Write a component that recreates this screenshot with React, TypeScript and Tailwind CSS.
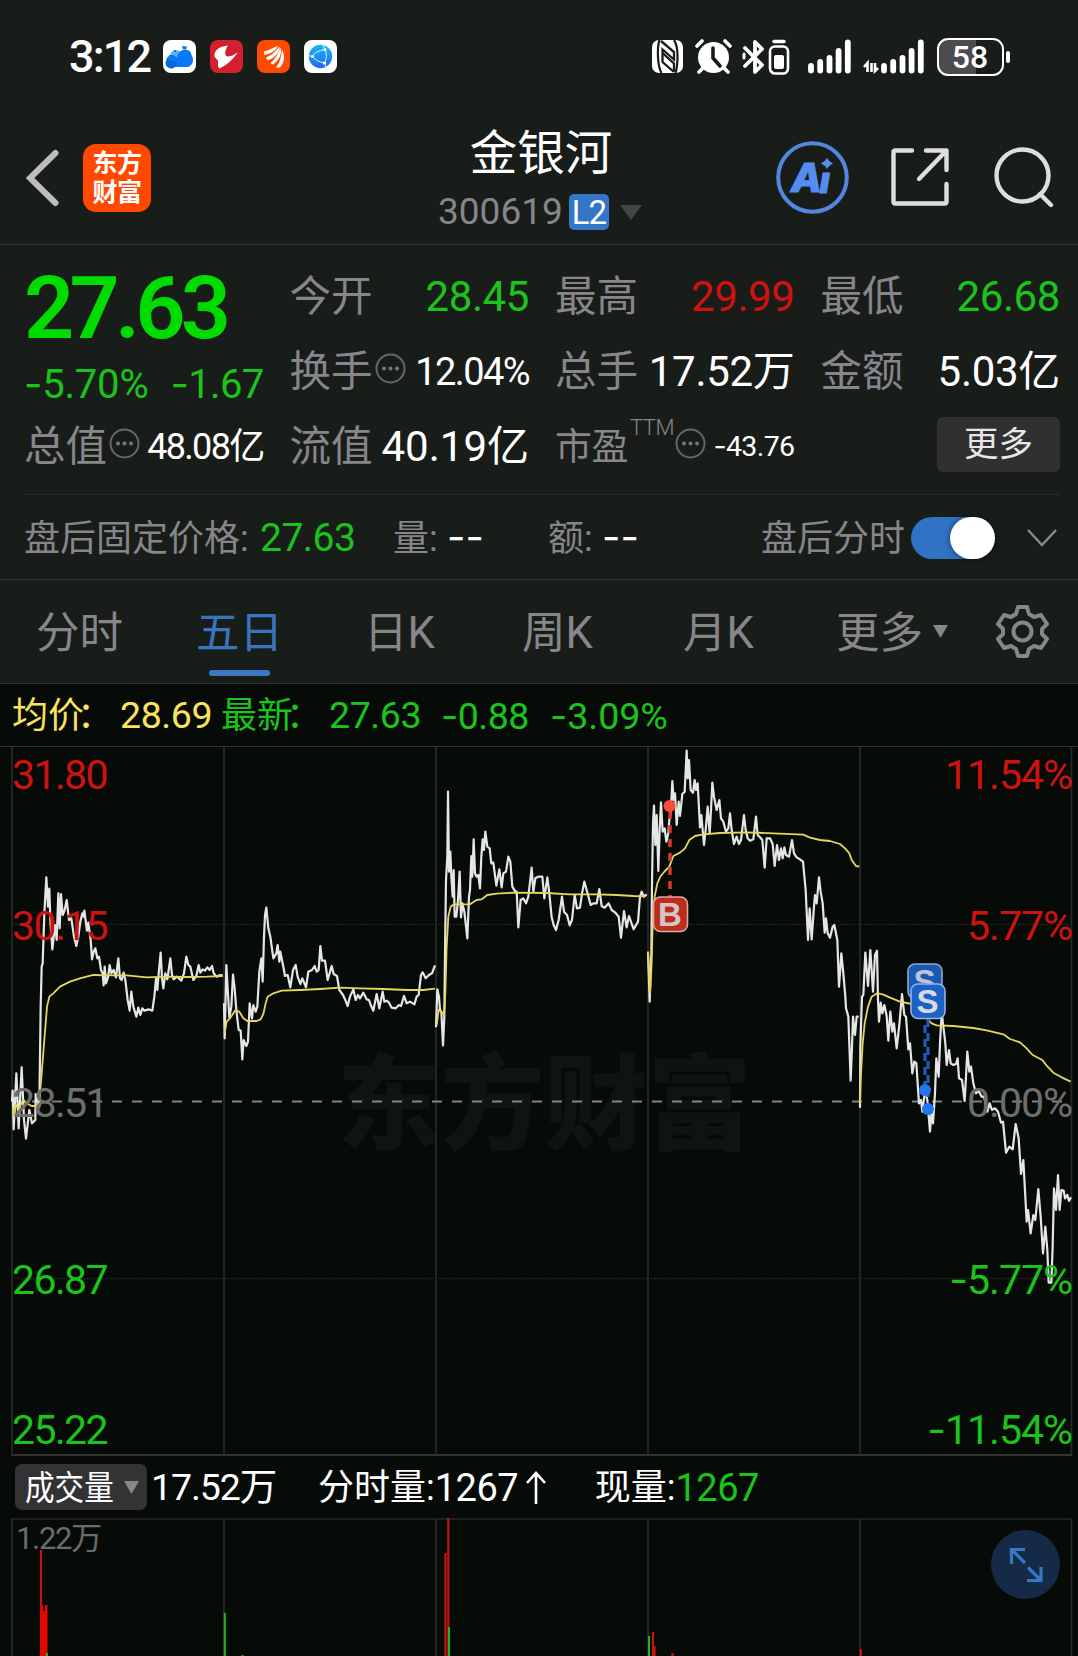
import React from "react";

const cjk = "font-['Roboto','Noto_Sans_CJK_SC',sans-serif]";

/** Numeric text: hyphens are set in Inter, whose dash is wider. */
function Num({ children, className = "" }: { children: string; className?: string }) {
  return (
    <span className={`whitespace-pre ${className}`}>
      {children.split(/(-+)/).map((part, i) =>
        part.startsWith("-") ? (
          <span key={i} className="font-['Inter']">{part}</span>
        ) : (
          part
        ),
      )}
    </span>
  );
}

function Info() {
  return (
    <svg className="size-[31px] shrink-0" viewBox="0 0 31 31" fill="none">
      <circle cx="15.5" cy="15.5" r="14" stroke="#67676a" strokeWidth="2" />
      <circle cx="9" cy="15.5" r="2" fill="#77777b" />
      <circle cx="15.5" cy="15.5" r="2" fill="#77777b" />
      <circle cx="22" cy="15.5" r="2" fill="#77777b" />
    </svg>
  );
}

function Signal() {
  return (
    <svg className="h-[35px] w-[43px]" viewBox="0 0 43 35" stroke="#fff" strokeWidth="5.8" strokeLinecap="round">
      <path d="M3 27v4.500M12.200 23v8.500M21.500 19v12.500M30.600 12v19.500M39.800 3.500v28" />
    </svg>
  );
}

function StatusBar() {
  return (
    <div className="flex h-[113px] items-center pl-[69px] text-white">
      <span className="w-[94px] text-[45px] leading-none font-medium tracking-[-1.800px]">3:12</span>
      <div className="flex gap-[14px]">
        <svg className="size-[33px]" viewBox="0 0 33 33">
          <rect width="33" height="33" rx="8" fill="#fff" />
          <circle cx="13" cy="16" r="6" fill="#58b4fb" />
          <path d="M9 27a6 6 0 0 1-2-11.500C11 14 13 17 14 18c0-10 14-11 14.500-3C32 20 29 27 24 27z" fill="#0879f4" />
          <path d="M3.500 20a5.500 5.500 0 1 0 10 2z" fill="#0568d8" />
          <path d="M19 6l5 .5-1 3h-3zM6 15l3 .5-1 2H6zM11 10h2v2h-2z" fill="#0879f4" />
        </svg>
        <svg className="size-[33px]" viewBox="0 0 33 33">
          <rect width="33" height="33" rx="8" fill="#d4202e" />
          <path d="M18 5.500C9 6 4 11 4.500 16c0 2 3 3 3.500 5 .5 3-1 5 1.500 7.500 6-3 12-7 18.500-16.500-4 3-7 4.500-11 4.500-2.500-1-2.500-6 1-11z" fill="#fff" />
        </svg>
        <svg className="size-[33px]" viewBox="0 0 33 33">
          <rect width="33" height="33" rx="8" fill="#ff4a00" />
          <path d="M7 11.500c5-1 9-4 14-5.500-2 5-8 8-14 9zM9 17.500c6-2 10-7 13.500-11 1 5-5 12-12 14zM13.500 23c5-4 8-10 10-15.500 2 6-2 14-8 17zM19 27.500c4-5 5-10 6-18 3 6 3 12-2 18z" fill="#fff" />
        </svg>
        <svg className="size-[33px]" viewBox="0 0 33 33">
          <defs>
            <linearGradient id="globe" x1="0" y1="0" x2="0" y2="1">
              <stop stopColor="#18b8f8" />
              <stop offset="1" stopColor="#2468ee" />
            </linearGradient>
          </defs>
          <rect width="33" height="33" rx="8" fill="#fff" />
          <circle cx="16.500" cy="16.500" r="11.700" fill="url(#globe)" />
          <path d="M8.500 16.500Q11 11 21 9.500Q24 16 20.500 23Q13 22 8.500 16.500M21 9.500l-2-4.500M20.500 23l1.500 4M8.500 16.500l-4-1" fill="none" stroke="#d6f4ff" />
          <circle cx="8.500" cy="16.500" r="1.600" fill="#fff" />
          <circle cx="21" cy="9.500" r="1.600" fill="#fff" />
          <circle cx="20.500" cy="23" r="1.600" fill="#fff" />
        </svg>
      </div>
      <div className="ml-auto flex items-center pr-[68px]">
        <svg className="h-[33px] w-[31px]" viewBox="0 0 31 33">
          <rect width="31" height="33" rx="7" fill="#fff" />
          <path d="M7.500 0Q5.500 6 6 17T9.500 33M22 0Q25.500 5 25.500 16T23.500 33" stroke="#191d1a" strokeWidth="2.200" fill="none" />
          <path d="M9 1L22 12V19.500L10.500 9.500V13L22 23.500V31.500" stroke="#191d1a" strokeWidth="2.300" fill="none" />
          <path d="M10.500 14V22L22 32" stroke="#191d1a" strokeWidth="2.300" fill="none" />
        </svg>
        <svg className="ml-[12px] h-[35px] w-[37px]" viewBox="0 0 37 35">
          <circle cx="18.500" cy="18.500" r="15.500" fill="#fff" />
          <path d="M2 7l5-5M35 7l-5-5M8 29l-4 4M29 29l4 4" stroke="#fff" strokeWidth="3.600" strokeLinecap="round" />
          <path d="M18 9v10l7 8" stroke="#191d1a" strokeWidth="3.600" fill="none" strokeLinecap="round" />
        </svg>
        <svg className="ml-[10px] h-[36px] w-[24px]" viewBox="0 0 24 36" fill="none" stroke="#fff" strokeWidth="3.800" strokeLinejoin="round" strokeLinecap="round">
          <path d="M3 9l17 17-7 7V3l7 7L3 27" />
          <path d="M2 15v4" strokeWidth="3" />
        </svg>
        <svg className="ml-[2px] h-[36px] w-[22px]" viewBox="0 0 22 36">
          <path d="M6 2.500h10" stroke="#fff" strokeWidth="3.500" strokeLinecap="round" />
          <rect x="2" y="7.500" width="18" height="27" rx="5" fill="none" stroke="#fff" strokeWidth="2.600" />
          <rect x="6" y="16" width="10" height="14" rx="2" fill="#fff" />
        </svg>
        <div className="ml-[18px]"><Signal /></div>
        <svg className="ml-[12px] h-[35px] w-[16px]" viewBox="0 0 16 35" fill="none" stroke="#fff" strokeWidth="2.600">
          <path d="M1 28l3.500-4v9M8.500 24v9M12 24v8l3-3" />
        </svg>
        <div className="ml-[2px]"><Signal /></div>
        <div className="ml-[13px] flex h-[38px] w-[67px] items-center justify-center rounded-[11px] border-[2.500px] border-white bg-linear-to-r from-[#4c4c4e] from-58% to-[#191d1a] to-58% pr-px text-[32px] leading-none font-medium">
          58
        </div>
        <div className="ml-[2px] h-[12px] w-[4px] rounded-full bg-white" />
      </div>
    </div>
  );
}

function Header() {
  return (
    <div className="flex h-[132px] border-b border-[#303331]">
      <div className="flex w-[438px] items-start pt-[31px] pl-[26px]">
        <svg className="mt-[5px] h-[58px] w-[34px]" viewBox="0 0 34 58" fill="none" stroke="#bdbdbd" strokeWidth="6" strokeLinecap="round">
          <path d="M29.500 4L4 29l25.500 25" />
        </svg>
        <div className="ml-[23px] flex h-[68px] w-[68px] flex-col items-center justify-center rounded-[13px] bg-[#ff4800] pb-[5px] font-['Noto_Sans_CJK_SC',sans-serif] text-[25px] leading-[29px] font-bold tracking-[-0.500px] text-white">
          <span>东方</span>
          <span>财富</span>
        </div>
      </div>
      <div className="flex w-[206px] flex-col">
        <div className="mt-[15px] text-center text-[47.500px] leading-[52px] text-white">金银河</div>
        <div className="mt-[12px] flex items-center">
          <span className="w-[131px] text-[37px] leading-[40px] text-[#86868b]">300619</span>
          <span className="flex h-[36px] w-[40px] items-center justify-center rounded-[5px] bg-[#3375c7] text-[33px] leading-none tracking-[-1px] text-white">L2</span>
          <svg className="ml-[11px] h-[15px] w-[22px]" viewBox="0 0 22 15"><path d="M0 0h22L11 15z" fill="#444545" /></svg>
        </div>
      </div>
      <div className="flex items-start pt-[28px] pl-[132px]">
        <svg className="size-[73px]" viewBox="0 0 73 73">
          <circle cx="36.500" cy="36.500" r="34.300" fill="none" stroke="#5386df" strokeWidth="4" />
          <text x="15" y="51" fill="#568cf0" stroke="#568cf0" strokeWidth="1.200" fontFamily="Inter" fontStyle="italic" fontWeight="800" fontSize="40">A</text>
          <text x="43.500" y="51.500" fill="#568cf0" stroke="#568cf0" strokeWidth="1.200" fontFamily="Inter" fontStyle="italic" fontWeight="800" fontSize="37">ı</text>
          <path d="M51 17q2 4 6 5.500-4 2-6 5.500-2-4-6-5.500 4-2 6-5.500z" fill="#568cf0" />
        </svg>
        <svg className="mt-[5px] ml-[41px] size-[60px]" viewBox="0 0 60 60" fill="none" stroke="#dedede" strokeWidth="4.400" strokeLinecap="round" strokeLinejoin="round">
          <path d="M22 4.500H5.500Q3.500 4.500 3.500 6.500V55.500Q3.500 57.500 5.500 57.500H54.500Q56.500 57.500 56.500 55.500V38M36 4.500H56.500V24M55 6L29 33" />
        </svg>
        <svg className="mt-[5px] ml-[43px] size-[62px]" viewBox="0 0 62 62" fill="none" stroke="#dedede" strokeWidth="4.400" strokeLinecap="round">
          <circle cx="29.500" cy="29.500" r="26" />
          <path d="M47 48l11 11" />
        </svg>
      </div>
    </div>
  );
}

function Cell({ label, info, children, className = "" }: { label: string; info?: boolean; children: React.ReactNode; className?: string }) {
  return (
    <div className={`flex items-center justify-between pt-[3px] leading-none ${className}`}>
      <span className="flex items-center whitespace-nowrap text-[#86868b]">
        <span className="text-[41.500px]">{label}</span>
        {info && <span className="-mt-[8px] ml-[2px]"><Info /></span>}
      </span>
      {children}
    </div>
  );
}

function Quote() {
  return (
    <div>
      <div className="grid h-[249px] grid-cols-4 grid-rows-[75px_75px_75px] gap-x-[26px] pt-[13px] pr-[18px] pl-[24px]">
        <div className="row-span-2 flex flex-col leading-none">
          <Num className="mt-[6px] text-[88px] font-semibold tracking-[-4.800px] text-[#00dc00]">27.63</Num>
          <div className="mt-[12px] flex justify-between text-[40px] text-[#1bc41b]">
            <Num className="tracking-[-0.200px]">-5.70%</Num>
            <Num className="tracking-[-0.700px]">-1.67</Num>
          </div>
        </div>
        <Cell label="今开"><Num className="text-[42px] tracking-[-0.400px] text-[#1bc41b]">28.45</Num></Cell>
        <Cell label="最高"><Num className="text-[42px] tracking-[-0.400px] text-[#d0120f]">29.99</Num></Cell>
        <Cell label="最低"><Num className="text-[42px] tracking-[-0.400px] text-[#1bc41b]">26.68</Num></Cell>
        <Cell label="换手" info><Num className="text-[38px] tracking-[-1.600px] text-white">12.04%</Num></Cell>
        <Cell label="总手"><Num className="text-[42px] tracking-[-0.300px] text-white">17.52万</Num></Cell>
        <Cell label="金额"><Num className="text-[42px] tracking-[-0.300px] text-white">5.03亿</Num></Cell>
        <Cell label="总值" info><Num className="text-[36px] tracking-[-1.700px] text-white">48.08亿</Num></Cell>
        <Cell label="流值"><Num className="text-[42px] text-white">40.19亿</Num></Cell>
        <div className="flex items-center pt-[3px] leading-none text-[#86868b]">
          <span className="text-[37px] tracking-[-0.500px]">市盈</span>
          <span className="-mt-[38px] ml-[2px] text-[22px] font-light tracking-[-0.500px]">TTM</span>
          <span className="-mt-[8px] ml-[1px]"><Info /></span>
          <Num className="ml-auto text-[28.500px] tracking-[-0.600px] text-white">-43.76</Num>
        </div>
        <div className="flex items-start justify-end pt-[9px]">
          <div className="flex h-[55px] w-[123px] items-center justify-center rounded-[6px] bg-[#303031] text-[34.500px] leading-none text-[#e6e6e6]">更多</div>
        </div>
      </div>
      <div className="mr-[18px] ml-[24px] h-px bg-[#292b2a]" />
      <div className="flex h-[85px] items-center border-b border-[#303331] pt-[3px] pl-[24px] text-[36px] leading-none whitespace-pre text-[#86868b]">
        <span className="w-[236px]">盘后固定价格:</span>
        <Num className="w-[133px] text-[39px] tracking-[-0.500px] text-[#1bc41b]">27.63</Num>
        <span className="w-[54px]">量:</span>
        <Num className="w-[101px] pb-[2px] text-[40px] text-white">--</Num>
        <span className="w-[54px]">额:</span>
        <Num className="w-[159px] pb-[2px] text-[40px] text-white">--</Num>
        <span className="w-[150px]">盘后分时</span>
        <div className="-mt-[2px] flex h-[42px] w-[84px] justify-end rounded-full bg-[#3073c4]">
          <div className="h-[42px] w-[45px] rounded-full bg-white shadow-[0_0_6px_#0008]" />
        </div>
        <svg className="-mt-[2px] ml-[31px] h-[20px] w-[32px]" viewBox="0 0 32 20" fill="none" stroke="#8a8a8d" strokeWidth="2.400"><path d="M2 2l14 15L30 2" /></svg>
      </div>
    </div>
  );
}

function Tabs() {
  return (
    <div className="flex h-[104px] items-center border-b border-[#303331] pt-[4px] pl-[36px] text-[43.500px] leading-none whitespace-nowrap text-[#86868b]">
      <span className="w-[160px]">分时</span>
      <span className="relative w-[168px] text-[#3875c0]">
        五日
        <span className="absolute top-[58px] left-[13px] h-[6px] w-[61px] rounded-full bg-[#3b79c2]" />
      </span>
      <span className="w-[158px]">日K</span>
      <span className="w-[161px]">周K</span>
      <span className="w-[153px]">月K</span>
      <span className="w-[97px]">更多</span>
      <svg className="-mt-[5px] h-[13px] w-[15px]" viewBox="0 0 16 14"><path d="M0 0h16L8 14z" fill="#86868b" /></svg>
      <svg className="-mt-[5px] ml-[48px] size-[53px]" viewBox="0 0 53 53" fill="none" stroke="#86868b" strokeWidth="4" strokeLinejoin="round">
        <path d="M22 2h9l2 7 5 3 7-2 6 9-5 5v5l5 5-6 9-7-2-5 3-2 7h-9l-2-7-5-3-7 2-6-9 5-5v-5l-5-5 6-9 7 2 5-3z" />
        <circle cx="26.500" cy="26.500" r="9" />
      </svg>
    </div>
  );
}

/* Traces are stored at three units per pixel; each day has its own origin. */
const days = [
  {
    origin: "translate(0 -7) scale(.33333)",
    price:
      "36,1085 38,1052 41,1168 49,1000 56,1165 65,982 72,1140 78,1196 88,1110 96,1150 106,1140 107,1062 118,1100 122,800 125,680 128,670 133,520 139,412 144,500 148,446 151,540 157,628 165,555 170,600 175,460 179,565 183,462 188,525 194,510 200,480 207,540 214,535 222,590 229,618 235,590 241,545 247,520 250,530 253,512 261,572 265,548 272,600 276,658 281,635 286,625 292,655 297,650 303,690 308,700 311,736 314,680 318,730 324,712 329,675 334,700 341,690 348,712 355,655 360,715 365,720 371,698 376,720 383,780 389,812 394,755 400,800 409,830 415,803 421,825 427,805 433,812 446,808 457,812 463,770 468,715 472,750 477,690 482,638 486,715 490,745 496,700 502,718 511,655 516,705 521,718 530,710 538,716 544,722 552,700 559,650 565,675 571,680 580,720 589,708 596,675 601,698 608,688 615,692 622,682 629,690 636,678 641,700 650,710 660,705 668,706",
    avg: "38,1100 42,1125 48,1095 56,1105 70,1080 80,1090 95,1098 106,1098 115,1090 120,1060 125,1000 133,900 141,800 148,770 160,760 180,740 210,725 240,715 280,705 320,706 380,706 440,712 500,710 560,711 620,710 668,708",
  },
  {
    origin: "translate(0 -7) scale(.33333)",
    price:
      "672,790 674,895 679,675 688,832 694,800 699,704 704,745 709,810 716,870 722,872 727,958 731,900 739,918 744,905 749,790 756,835 760,795 767,815 772,800 778,695 784,655 788,725 792,590 795,525 799,503 805,565 811,590 820,655 829,640 833,615 838,665 841,635 850,680 855,708 863,705 871,742 879,690 887,675 893,710 901,732 907,715 918,742 925,695 936,690 944,678 950,695 956,690 961,618 966,662 975,662 983,720 995,678 1001,702 1011,708 1018,750 1029,765 1036,780 1043,798 1050,770 1060,748 1067,780 1074,765 1080,775 1090,758 1100,778 1107,780 1112,795 1120,812 1130,762 1138,805 1148,755 1153,785 1160,782 1167,788 1175,803 1187,805 1197,795 1203,798 1212,768 1220,790 1230,785 1243,793 1250,770 1256,765 1263,705 1268,697 1277,715 1287,705 1296,700 1305,676",
    avg: "674,880 680,845 690,835 705,812 718,815 730,835 742,843 770,843 782,838 790,822 797,790 803,770 820,760 845,752 900,750 960,747 1020,743 1080,745 1150,747 1220,750 1270,750 1305,746",
  },
  {
    origin: "translate(430 -7) scale(.33333)",
    price:
      "18,862 22,748 27,770 30,810 34,815 39,916 43,830 45,640 48,420 52,350 54,155 57,395 61,335 64,410 68,470 71,390 74,530 79,530 84,480 89,395 93,532 97,490 103,515 112,595 117,470 120,450 124,348 127,410 131,298 135,400 140,410 145,405 150,445 154,350 158,298 162,330 166,275 172,320 179,325 184,370 190,368 199,437 208,388 215,442 220,400 228,395 235,350 241,365 247,440 254,452 260,455 265,562 272,480 280,475 288,490 295,470 305,383 310,455 316,415 325,410 337,410 343,475 352,412 358,460 365,532 371,555 378,570 386,540 396,470 402,515 411,525 419,556 426,540 434,465 441,505 450,503 457,455 463,425 474,465 482,495 490,490 500,490 508,447 515,498 524,503 536,490 545,510 555,517 566,530 573,593 582,513 590,562 597,528 611,568 624,545 630,470 635,455 642,470 650,463",
    avg: "20,855 26,810 34,815 42,825 46,760 50,620 55,530 62,500 72,493 120,493 140,480 155,478 172,465 200,461 250,458 350,459 420,463 500,463 560,465 610,468 645,469",
  },
  {
    origin: "translate(640 -7) scale(.33333)",
    price:
      "24,635 29,785 34,640 36,430 39,250 42,197 46,315 50,225 55,393 59,270 63,187 68,275 74,265 79,305 85,280 88,240 92,220 97,123 101,180 105,160 110,255 116,185 120,228 127,162 134,155 140,32 143,115 147,60 152,150 159,158 164,120 168,150 173,130 180,262 184,225 192,315 198,260 203,200 209,280 213,210 217,128 222,170 230,210 238,180 243,235 250,245 258,275 265,265 270,220 275,270 282,312 290,290 297,312 303,300 312,225 317,270 323,295 330,302 340,298 348,230 353,285 360,292 367,300 374,383 380,295 390,295 398,312 404,378 411,315 417,360 423,325 428,355 433,322 438,345 447,350 456,300 462,340 470,352 480,358 489,365 497,450 504,600 509,505 515,598 522,500 525,465 530,490 537,412 542,455 548,490 554,578 558,535 563,580 570,593 578,560 583,555 592,600 597,740 604,640 610,700 616,770 618,805 625,830 632,1022 636,920 639,830 645,885 650,830 656,830",
    avg: "24,635 30,760 34,690 38,560 44,470 52,430 62,408 75,393 88,380 100,348 120,338 135,325 148,300 165,288 190,283 240,279 320,277 400,280 490,284 510,293 540,300 570,303 600,312 615,325 628,340 635,360 648,378 658,380",
  },
  {
    origin: "translate(840 153) scale(.33333)",
    price:
      "60,623 61,440 66,290 70,285 76,158 84,258 91,150 99,275 105,165 111,152 114,300 117,365 122,308 127,340 133,315 140,348 145,422 151,335 157,395 162,370 170,445 178,375 186,282 193,345 198,350 205,448 210,430 217,520 223,485 229,490 237,610 243,600 247,635 256,565 262,600 270,695 274,640 279,670 285,580 289,475 296,530 300,430 305,335 310,380 316,430 320,495 327,450 332,490 340,495 348,492 353,475 357,535 366,540 374,603 382,455 388,515 393,500 400,550 408,580 416,572 425,590 432,590 442,635 449,610 456,630 465,625 474,635 483,668 489,665 498,758 508,740 518,748 527,672 536,715 543,822 550,780 560,965 564,930 572,1000 580,945 586,960 595,867 602,950 609,1060 616,980 622,1050 626,1148 634,1148 638,1040 642,865 648,930 654,825 659,930 664,870 671,872 675,895 682,885 687,903 693,892",
    avg: "60,610 62,540 68,430 74,370 84,320 95,290 112,279 130,284 150,293 180,305 215,312 235,325 255,350 275,370 290,376 340,378 400,384 440,391 490,403 510,417 540,427 560,445 578,465 607,480 620,497 640,518 665,532 692,545",
  },
];

function Marker({ x, y, letter, fill, stroke, ink }: { x: number; y: number; letter: string; fill: string; stroke: string; ink: string }) {
  return (
    <g>
      <rect x={x} y={y} width="34" height="34.500" rx="7" fill={fill} stroke={stroke} strokeWidth="1.600" />
      <text x={x + 16.5} y={y + 28.5} textAnchor="middle" fontFamily="Liberation Sans" fontWeight="700" fontSize="33" fill={ink}>{letter}</text>
    </g>
  );
}

function Chart() {
  return (
    <div className="relative h-[709px] text-[41px] leading-[41px]">
      <div className="absolute top-[290px] left-[337px] font-['Noto_Sans_CJK_SC',sans-serif] text-[104px] leading-[120px] font-black tracking-[-0.500px] whitespace-nowrap text-[#101411]">东方财富</div>
      <svg className="absolute top-0 left-0 h-[709px] w-[1078px]" viewBox="0 0 1078 709" fill="none">
        <path d="M12 0V709M224 0V709M436 0V709M648 0V709M860 0V709M1071.500 0V709" stroke="#262827" strokeWidth="1.800" />
        <path d="M12 708H1072" stroke="#303331" strokeWidth="2" />
        <path d="M12 177.500H1072M12 531.500H1072" stroke="#252726" strokeWidth="1.400" strokeDasharray="1.500 1.500" />
        <path d="M12 354.500H1072" stroke="#848486" strokeWidth="2" strokeDasharray="10 10" />
        {days.map((d, i) => (
          <g key={i} transform={d.origin} strokeLinejoin="round">
            <polyline points={d.price} stroke="#e6e6e6" strokeWidth="6.600" />
            <polyline points={d.avg} stroke="#e6d65f" strokeWidth="5.400" />
          </g>
        ))}
        <path d="M670 64V150" stroke="#d43a2d" strokeWidth="3.500" strokeDasharray="8 6" />
        <circle cx="669.500" cy="59" r="6" fill="#fa4b3c" />
        <Marker x={653.5} y={150} letter="B" fill="#bd2c1d" stroke="#e0a6a2" ink="#d6c3c6" />
        <path d="M925 250V340M928 272V360" stroke="#1b5db8" strokeWidth="3.200" strokeDasharray="8 6" />
        <circle cx="925" cy="343" r="6" fill="#2377ee" />
        <circle cx="928" cy="362" r="6" fill="#2377ee" />
        <Marker x={908} y={217} letter="S" fill="#1959b2" stroke="#8ea7ce" ink="#b9c4d6" />
        <Marker x={911} y={237} letter="S" fill="#1c62c5" stroke="#91b3e4" ink="#d5dbe5" />
      </svg>
      <div className="absolute inset-y-0 left-[12px] w-[110px] tracking-[-1.600px]">
        <Num className="absolute top-[8px] text-[#d0120f]">31.80</Num>
        <Num className="absolute top-[159px] text-[#d0120f]">30.15</Num>
        <Num className="absolute top-[336px] text-[#6d6e6d]">28.51</Num>
        <Num className="absolute top-[513px] text-[#1bc41b]">26.87</Num>
        <Num className="absolute top-[663px] text-[#1bc41b]">25.22</Num>
      </div>
      <div className="absolute inset-y-0 right-[6px] w-[150px] tracking-[-1px]">
        <Num className="absolute top-[8px] right-0 text-[#d0120f]">11.54%</Num>
        <Num className="absolute top-[159px] right-0 text-[#d0120f]">5.77%</Num>
        <Num className="absolute top-[336px] right-0 text-[#6d6e6d]">0.00%</Num>
        <Num className="absolute top-[512px] right-0 text-[#1bc41b]">-5.77%</Num>
        <Num className="absolute top-[662px] right-0 text-[#1bc41b]">-11.54%</Num>
      </div>
    </div>
  );
}

function Volume() {
  return (
    <>
      <div className="flex h-[62px] items-center pl-[15px] text-[38px] leading-none whitespace-pre text-white">
        <div className="flex h-[46px] w-[132px] items-center rounded-[7px] bg-[#333335] pl-[10px]">
          <span className="w-[99px] shrink-0">
            <span className="inline-block origin-left scale-x-[.87] text-[34px]">成交量</span>
          </span>
          <svg className="h-[13px] w-[15px] shrink-0" viewBox="0 0 15 13"><path d="M0 0h15L7.500 13z" fill="#88888c" /></svg>
        </div>
        <span className="ml-[4px] w-[167px] pt-[2px] text-[37.500px] tracking-[-1.100px]">17.52万</span>
        <span className="pt-[2px] text-[36px]">分时量:</span>
        <span className="w-[90px] pt-[2px] tracking-[-0.500px]">1267</span>
        <svg className="mr-[48px] h-[34px] w-[22px]" viewBox="0 0 22 34" fill="none" stroke="#fff" strokeWidth="2.600"><path d="M11 34V3M2 13l9-10 9 10" /></svg>
        <span className="pt-[2px] text-[36px]">现量:</span>
        <span className="pt-[2px] tracking-[-0.500px] text-[#1bc41b]">1267</span>
      </div>
      <div className="relative h-[138px] overflow-hidden">
        <svg className="absolute top-0 left-0 h-[138px] w-[1078px]" viewBox="0 0 1078 138">
          <path d="M12 1H1072" stroke="#262827" strokeWidth="1.600" />
          <path d="M12 0V138M224 0V138M436 0V138M648 0V138M860 0V138M1071.500 0V138" stroke="#262827" strokeWidth="1.800" />
          <path d="M41 32V138M445.500 35V138M448.300 0V138M653 114V138M654.500 128V138M672.500 135V138M860.800 131V138" stroke="#c5140f" strokeWidth="2.200" />
          <path d="M41 138V87h2v6h2v-6h2.500v51z" fill="#e60500" />
          <path d="M47 135V138M224.800 95V138M242.500 137V138M449 109V138M649 118V138" stroke="#1fb51f" strokeWidth="2" />
        </svg>
        <span className="absolute top-[4px] left-[16px] text-[31px] leading-[34px] tracking-[-1.300px] text-[#6a6b6a]">1.22万</span>
        <div className="absolute top-[12px] right-[18px] flex size-[69px] items-center justify-center rounded-full bg-[#142a46]">
          <svg className="size-[36px]" viewBox="0 0 36 36" fill="none" stroke="#3677c6" strokeWidth="3.200">
            <path d="M17 2.500H3.500V17M4 3l13 13M19 33.500H33V20M32.500 33L20 20.500" />
          </svg>
        </div>
      </div>
    </>
  );
}

export default function App() {
  return (
    <div className={`h-[1656px] w-[1078px] overflow-hidden bg-[#191d1a] ${cjk}`}>
      <StatusBar />
      <Header />
      <Quote />
      <Tabs />
      <div className="bg-[#070b08]">
        <div className="flex h-[63px] items-center border-b border-[#303331] pt-[2px] pl-[12px] text-[37.500px] leading-none whitespace-pre text-[#1bc41b]">
          <span className="w-[108px] text-[36px] text-[#fae35f]">均价<span className="-ml-[7px]">：</span></span>
          <Num className="w-[101px] tracking-[-0.400px] text-[#fae35f]">28.69</Num>
          <span className="w-[108px] text-[36px]">最新<span className="-ml-[7px]">：</span></span>
          <Num className="w-[112px] tracking-[-0.400px]">27.63</Num>
          <Num className="w-[109px] tracking-[-0.500px]">-0.88</Num>
          <Num>-3.09%</Num>
        </div>
        <Chart />
        <Volume />
      </div>
    </div>
  );
}
